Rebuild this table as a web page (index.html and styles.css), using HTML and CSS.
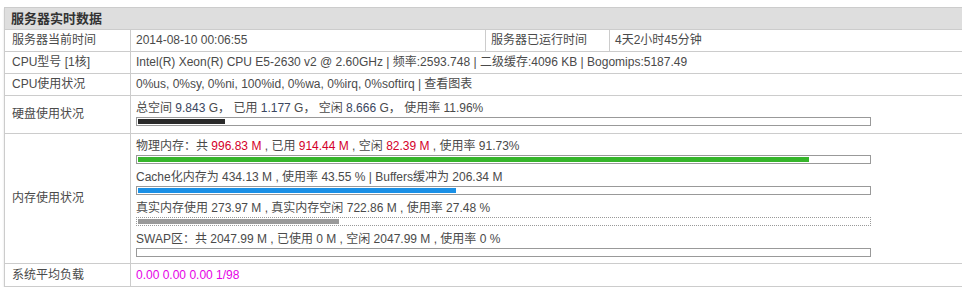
FILE: index.html
```html
<!DOCTYPE html>
<html lang="zh-CN">
<head>
<meta charset="utf-8">
<title>服务器实时数据</title>
<link rel="stylesheet" href="styles.css">
</head>
<body>
<div class="wrap">
<table class="info">
  <colgroup>
    <col class="c1"><col class="c2"><col class="c3"><col class="c4">
  </colgroup>
  <tr class="head"><th colspan="4">服务器实时数据</th></tr>
  <tr class="row">
    <td class="lbl">服务器当前时间</td>
    <td>2014-08-10 00:06:55</td>
    <td>服务器已运行时间</td>
    <td>4天2小时45分钟</td>
  </tr>
  <tr class="row">
    <td class="lbl">CPU型号 [1核]</td>
    <td colspan="3">Intel(R) Xeon(R) CPU E5-2630 v2 @ 2.60GHz | 频率:2593.748 | 二级缓存:4096 KB | Bogomips:5187.49</td>
  </tr>
  <tr class="row">
    <td class="lbl">CPU使用状况</td>
    <td colspan="3">0%us, 0%sy, 0%ni, 100%id, 0%wa, 0%irq, 0%softirq | 查看图表</td>
  </tr>
  <tr class="disk">
    <td class="lbl">硬盘使用状况</td>
    <td colspan="3" class="bars">
      <div class="block">
        <div class="txt">总空间 <span class="num">9.843</span> G， 已用 <span class="num">1.177</span> G， 空闲 <span class="num">8.666</span> G， 使用率 11.96%</div>
        <div class="bar"><div class="fill dark" style="width:11.96%"></div></div>
      </div>
    </td>
  </tr>
  <tr class="mem">
    <td class="lbl">内存使用状况</td>
    <td colspan="3" class="bars">
      <div class="block">
        <div class="txt">物理内存：共 <span class="red">996.83 M</span> , 已用 <span class="red">914.44 M</span> , 空闲 <span class="red">82.39 M</span> , 使用率 91.73%</div>
        <div class="bar"><div class="fill green" style="width:91.73%"></div></div>
      </div>
      <div class="block">
        <div class="txt">Cache化内存为 434.13 M , 使用率 43.55 % | Buffers缓冲为 206.34 M</div>
        <div class="bar"><div class="fill blue" style="width:43.55%"></div></div>
      </div>
      <div class="block">
        <div class="txt">真实内存使用 273.97 M , 真实内存空闲 722.86 M , 使用率 27.48 %</div>
        <div class="bar dotted"><div class="fill gray" style="width:27.48%"></div></div>
      </div>
      <div class="block">
        <div class="txt">SWAP区：共 2047.99 M , 已使用 0 M , 空闲 2047.99 M , 使用率 0 %</div>
        <div class="bar"><div class="fill gray" style="width:0%"></div></div>
      </div>
    </td>
  </tr>
  <tr class="row load">
    <td class="lbl">系统平均负载</td>
    <td colspan="3" class="mag">0.00 0.00 0.00 1/98</td>
  </tr>
</table>
</div>
</body>
</html>
```
FILE: styles.css
```css
html, body {
  margin: 0;
  padding: 0;
  background: #fff;
  overflow: hidden;
}
body {
  font-family: "Liberation Sans", Arial, "Noto Sans CJK SC", sans-serif;
  font-size: 12px;
  color: #4a4a4a;
}
.wrap {
  padding: 7px 0 0 4px;
}
.info {
  width: 958px;
  border-collapse: collapse;
  table-layout: fixed;
  box-shadow: 0 2px 2px rgba(0,0,0,0.12);
}
.c1 { width: 126px; }
.c2 { width: 355px; }
.c3 { width: 124px; }
.c4 { width: auto; }
.info th, .info td {
  border: 1px solid #ccc;
  text-align: left;
  vertical-align: middle;
  padding: 0 0 0 5px;
  line-height: 17px;
  white-space: nowrap;
  overflow: hidden;
}
.info tr > :last-child { border-right: none; }
.head th {
  background: #dedede;
  color: #333;
  font-size: 13px;
  font-weight: bold;
  height: 21px;
  padding-left: 6px;
}
.row td { height: 21px; }
.lbl { padding-left: 7px !important; }
.bars { padding: 4px 0 0 5px !important; vertical-align: top !important; }
.disk td { height: 33px; }
.mem td { height: 125px; }
.block { margin-bottom: 5px; }
.txt { height: 17px; line-height: 17px; }
.bar {
  width: 731px;
  height: 5px;
  border: 1px solid #999;
  padding: 1px;
}
.bar.dotted { border-style: dotted; }
.fill { height: 5px; }
.fill.dark { background: #2a2a2a; }
.fill.green { background: #36b52b; }
.fill.blue { background: #1a90e6; }
.fill.gray { background: #999; }
.num { color: #3a4660; }
.red { color: #d4002a; }
.mag { color: #e600e6; }
.load td { height: 22px; }
```
